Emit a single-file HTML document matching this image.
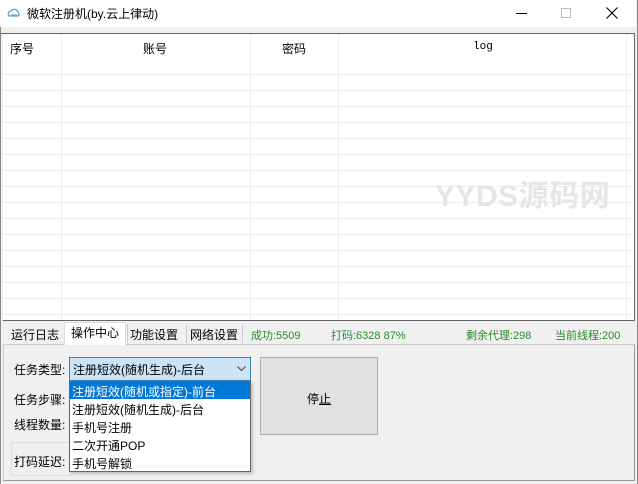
<!DOCTYPE html>
<html><head><meta charset="utf-8"><style>
*{margin:0;padding:0;box-sizing:border-box}
body{width:638px;height:484px;overflow:hidden;background:#f0f0f0;font-family:"Liberation Sans","Microsoft YaHei","Noto Sans CJK SC",sans-serif;font-size:12px;color:#000;position:relative}
.a{position:absolute}
.t{white-space:nowrap}
</style></head><body>
<div class="a" style="left:0;top:0;width:638px;height:484px;border:1px solid #888;border-top:none;border-bottom:none"></div>
<div class="a" style="left:0;top:0;width:636px;height:27px;background:#fff"></div>
<svg class="a" style="left:7px;top:8px" width="14" height="10" viewBox="0 0 14 10"><path d="M2 8a3 3 0 0 1 2-5a4 4 0 0 1 7 1a2.5 2.5 0 0 1 0 4z" fill="none" stroke="#5aa0c8" stroke-width="1.2"/><path d="M4 7h6" stroke="#5aa0c8"/></svg>
<div class="a t" style="left:27px;top:5px;font-size:12px">微软注册机(by.云上律动)</div>
<div class="a" style="left:516px;top:13px;width:11px;height:1px;background:#000"></div>
<div class="a" style="left:561px;top:8px;width:10px;height:10px;border:1px solid #bbb"></div>
<svg class="a" style="left:606px;top:7px" width="12" height="12"><path d="M0.5 0.5L11.5 11.5M11.5 0.5L0.5 11.5" stroke="#000" stroke-width="1.1"/></svg>
<div class="a" style="left:1px;top:33px;width:634px;height:1px;background:#666"></div>
<div class="a" style="left:3px;top:34px;width:632px;height:287px;background:#fff;border-right:1px solid #666;border-bottom:1px solid #666"></div>
<div class="a" style="left:3px;top:34px;width:631px;height:286px;background:repeating-linear-gradient(to bottom,transparent 0,transparent 15px,#ececec 15px,#ececec 16px);background-position:0 25px;background-size:100% 16px;clip-path:inset(25px 0 0 0)"></div>
<div class="a" style="left:3px;top:34px;width:631px;background:#fff;height:26px"></div>
<div class="a" style="left:61px;top:34px;width:1px;height:286px;background:#ececec"></div>
<div class="a" style="left:250px;top:34px;width:1px;height:286px;background:#ececec"></div>
<div class="a" style="left:338px;top:34px;width:1px;height:286px;background:#ececec"></div>
<div class="a" style="left:626px;top:34px;width:1px;height:286px;background:#ececec"></div>
<div class="a t" style="left:10px;top:40px">序号</div>
<div class="a t" style="left:143px;top:40px">账号</div>
<div class="a t" style="left:282px;top:40px">密码</div>
<div class="a t" style="left:473px;top:41px;font-family:'Liberation Mono',monospace;font-size:11px">log</div>
<div class="a t" style="left:435px;top:171px;font-size:30px;font-weight:bold;color:#e6e6e6;letter-spacing:0.5px">YYDS源码网</div>
<div class="a" style="left:3px;top:344px;width:632px;height:1px;background:#d8d8d8"></div>
<div class="a" style="left:3px;top:344px;width:632px;height:137px;border:1px solid #ccc;border-right-color:#999;border-bottom-color:#999"></div>
<div class="a" style="left:64px;top:322px;width:62px;height:23px;background:#fff;border:1px solid #ddd;border-bottom:none"></div>
<div class="a t" style="left:11px;top:326px">运行日志</div>
<div class="a t" style="left:71px;top:324px">操作中心</div>
<div class="a t" style="left:130px;top:326px">功能设置</div>
<div class="a t" style="left:190px;top:326px">网络设置</div>
<div class="a" style="left:127px;top:324px;width:1px;height:19px;background:#ccc"></div>
<div class="a" style="left:186px;top:324px;width:1px;height:19px;background:#ccc"></div>
<div class="a" style="left:242px;top:324px;width:1px;height:19px;background:#ccc"></div>
<div class="a t" style="left:251px;top:327px;color:#2a8a2a;font-size:11px">成功:5509</div>
<div class="a t" style="left:331px;top:327px;color:#2a8a2a;font-size:11px">打码:6328 87%</div>
<div class="a t" style="left:466px;top:327px;color:#2a8a2a;font-size:11px">剩余代理:298</div>
<div class="a t" style="left:555px;top:327px;color:#2a8a2a;font-size:11px">当前线程:200</div>
<div class="a t" style="left:14px;top:361px">任务类型:</div>
<div class="a t" style="left:14px;top:391px">任务步骤:</div>
<div class="a t" style="left:14px;top:416px">线程数量:</div>
<div class="a" style="left:11px;top:442px;width:60px;height:34px;border:1px solid #ddd"></div>
<div class="a t" style="left:14px;top:453px">打码延迟:</div>
<div class="a" style="left:69px;top:357px;width:182px;height:24px;background:#cce4f7;border:1px solid #3c7fb1"></div>
<div class="a t" style="left:73px;top:361px">注册短效(随机生成)-后台</div>
<svg class="a" style="left:237px;top:366px" width="9" height="6"><path d="M0.5 0.5L4.5 4.5L8.5 0.5" fill="none" stroke="#444"/></svg>
<div class="a" style="left:260px;top:357px;width:118px;height:78px;background:#e1e1e1;border:1px solid #adadad"></div>
<div class="a t" style="left:307px;top:390px">停<u>止</u></div>
<div class="a" style="left:69px;top:381px;width:182px;height:91px;background:#fff;border:1px solid #646464;box-shadow:2px 2px 3px rgba(0,0,0,.2)"></div>
<div class="a" style="left:70px;top:382px;width:180px;height:17px;background:#0078d7"></div>
<div class="a t" style="left:72px;top:383px;color:#fff">注册短效(随机或指定)-前台</div>
<div class="a t" style="left:72px;top:401px">注册短效(随机生成)-后台</div>
<div class="a t" style="left:72px;top:419px">手机号注册</div>
<div class="a t" style="left:72px;top:437px">二次开通POP</div>
<div class="a t" style="left:72px;top:455px">手机号解锁</div>
</body></html>
